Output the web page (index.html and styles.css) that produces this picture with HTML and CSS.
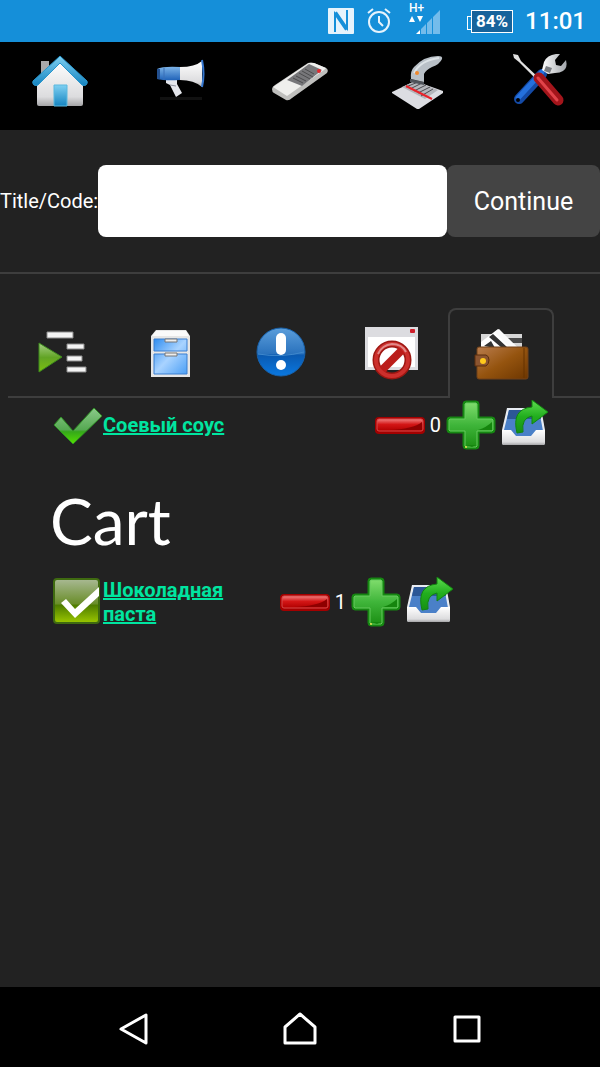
FILE: index.html
```
<!DOCTYPE html>
<html lang="en">
<head>
  <meta charset="UTF-8">
  <meta name="viewport" content="width=device-width, initial-scale=1.0">
  <title>Cart</title>
  <link rel="stylesheet" href="styles.css">
</head>
<body>
  <!-- Shared gradients and the icons used more than once -->
  <svg class="defs" aria-hidden="true">
    <defs>
      <linearGradient id="roof" x1="0" y1="0" x2="0" y2="1"><stop offset="0" stop-color="#7fd0f2"/><stop offset="1" stop-color="#1584c0"/></linearGradient>
      <linearGradient id="wall" x1="0" y1="0" x2="0" y2="1"><stop offset="0" stop-color="#fff"/><stop offset=".8" stop-color="#dcdcde"/><stop offset="1" stop-color="#a5a5a7"/></linearGradient>
      <linearGradient id="blue" x1="0" y1="0" x2="0" y2="1"><stop offset="0" stop-color="#7db4e8"/><stop offset="1" stop-color="#1f62b8"/></linearGradient>
      <linearGradient id="drawer" x1="0" y1="0" x2="1" y2="1"><stop offset="0" stop-color="#2f8df0"/><stop offset=".5" stop-color="#a9d3ff"/><stop offset="1" stop-color="#4b9ff5"/></linearGradient>
      <linearGradient id="ball" x1="0" y1="0" x2="0" y2="1"><stop offset="0" stop-color="#5b9edb"/><stop offset=".54" stop-color="#2a72bd"/><stop offset=".56" stop-color="#0a59b0"/><stop offset="1" stop-color="#0a78e0"/></linearGradient>
      <linearGradient id="red" x1="0" y1="0" x2="0" y2="1"><stop offset="0" stop-color="#f08080"/><stop offset=".45" stop-color="#d41616"/><stop offset="1" stop-color="#b00000"/></linearGradient>
      <linearGradient id="green" x1="0" y1="0" x2="0" y2="1"><stop offset="0" stop-color="#7fdc6c"/><stop offset=".5" stop-color="#3fb53a"/><stop offset="1" stop-color="#1c8f14"/></linearGradient>
      <linearGradient id="arrow" x1="0" y1="0" x2="0" y2="1"><stop offset="0" stop-color="#5fdc50"/><stop offset=".5" stop-color="#22ae1e"/><stop offset="1" stop-color="#169012"/></linearGradient>
      <linearGradient id="tick" x1="0" y1="0" x2="0" y2="1"><stop offset="0" stop-color="#8cc98a"/><stop offset=".6" stop-color="#56a952"/><stop offset=".66" stop-color="#35a81a"/><stop offset="1" stop-color="#55e000"/></linearGradient>
      <linearGradient id="box" x1="0" y1="0" x2="0" y2="1"><stop offset="0" stop-color="#a9b994"/><stop offset=".56" stop-color="#6a8e2a"/><stop offset=".6" stop-color="#4f7d00"/><stop offset="1" stop-color="#9cc800"/></linearGradient>
      <linearGradient id="play" x1="0" y1="0" x2="0" y2="1"><stop offset="0" stop-color="#a6cf85"/><stop offset=".5" stop-color="#62a425"/><stop offset="1" stop-color="#7cc010"/></linearGradient>
      <linearGradient id="leather" x1="0" y1="0" x2="1" y2="1"><stop offset="0" stop-color="#ba7d4e"/><stop offset=".5" stop-color="#95540f"/><stop offset="1" stop-color="#6d3600"/></linearGradient>
      <linearGradient id="metal" x1="0" y1="0" x2="1" y2="0"><stop offset="0" stop-color="#fff"/><stop offset="1" stop-color="#a2a6ab"/></linearGradient>

      <symbol id="minus" viewBox="0 0 50 50">
        <rect x="0" y="17" width="50" height="17" rx="4" fill="#a30000"/>
        <rect x="2" y="19" width="46" height="12" rx="2" fill="url(#red)" stroke="#d64a4a"/>
        <path d="M14 30q24-1 33-8v8z" fill="#8e0000"/>
      </symbol>
      <symbol id="plus" viewBox="0 0 50 50">
        <path d="M20 1h10q3 0 3 3v13h13q3 0 3 3v10q0 3-3 3H33v13q0 3-3 3H20q-3 0-3-3V33H4q-3 0-3-3V20q0-3 3-3h13V4q0-3 3-3z" fill="#168c12" stroke="#168212"/>
        <path d="M20 3h10l1 1v15h15l1 1v10l-1 1H31v15l-1 1H20l-1-1V31H4l-1-1V20l1-1h15V4z" fill="url(#green)" stroke="#66c95e"/>
        <path d="M32 30q9-3 14-8v8zM20 45h10l-4 2z" fill="#15850e"/>
        <circle cx="20" cy="47" r="1" fill="#e6e34b"/>
      </symbol>
      <symbol id="tray" viewBox="0 0 50 50">
        <path d="M6 8h34l4 22v13q0 2-2 2H3q-2 0-2-2V30z" fill="#e8ecf2"/>
        <path d="M8 10h30l4 21-7 7H10l-7-8z" fill="#4a80c8"/>
        <path d="M8 10h30l2 9H6z" fill="#2c5796"/>
        <path d="M1 30h9l5 6h15l5-6h9v13q0 2-2 2H3q-2 0-2-2z" fill="url(#wall)"/>
        <path d="M16 33Q10 9 31 7V0l16 12-16 12v-8q-11 2-9 16z" fill="url(#arrow)" stroke="#11840e"/>
      </symbol>
    </defs>
  </svg>

  <div class="status-bar">
    <svg width="26" height="26" viewBox="0 0 26 26" aria-label="NFC">
      <rect width="26" height="26" rx="1" fill="#e6f3fc"/>
      <path d="M7 24V6l11 16M19 2v18L8 4" fill="none" stroke="#158fd9" stroke-width="2"/>
    </svg>
    <svg class="alarm" width="24" height="26" viewBox="0 0 24 26" fill="none" stroke="#e6f3fc" stroke-width="2" aria-label="Alarm">
      <circle cx="12" cy="14" r="10"/>
      <path d="M12 8v6l4 4M1 5l5-4M23 5l-5-4"/>
    </svg>
    <div class="signal">
      <span class="network">H+</span>
      <svg width="32" height="26" viewBox="0 0 32 26" aria-label="Signal">
        <path d="M0 13l3-6 3 6zM8 7h6l-3 6zM7 25l4-4v4z" fill="#fff"/>
        <path d="M12 20l5-5v10h-5zM18 14l5-5v16h-5zM24 8l7-7v24h-7z" fill="#74bceb"/>
      </svg>
    </div>
    <span class="battery">84%</span>
    <span class="time">11:01</span>
  </div>

  <nav class="main-nav">
    <a href="#home" aria-label="Home">
      <svg viewBox="0 0 56 56">
        <path d="M9 7h8v14H9z" fill="#a9a9ab"/>
        <path d="M5 28L28 6l23 22v22q0 2-2 2H7q-2 0-2-2z" fill="url(#wall)"/>
        <path d="M28 2l27 25q1 2-1 4-2 1-4 0L28 9 6 31q-2 1-4 0-2-2-1-4z" fill="url(#roof)" stroke="#2795cc"/>
        <path d="M22 31h13v21H22z" fill="url(#roof)" stroke="#5bb8de"/>
      </svg>
    </a>
    <a href="#promo" aria-label="Promotions">
      <svg viewBox="0 0 56 56">
        <path d="M8 43h42v3H8z" fill="#111"/>
        <path d="M14 25l11 1v4l5 9-6 4-6-12-4-2z" fill="#e4e6ec"/>
        <path d="M18 31l6 1" stroke="#8e93a0"/>
        <path d="M5 15q6-3 23-2v13q-16 1-23-1z" fill="url(#blue)"/>
        <path d="M5 15h3v10H5z" fill="#23508f"/>
        <path d="M12 14v12" stroke="#3b71b8"/>
        <path d="M28 13q15 0 22-6v26q-8-7-22-7z" fill="url(#wall)"/>
        <path d="M50 6q3 14 0 27" fill="none" stroke="#3476cf" stroke-width="2"/>
      </svg>
    </a>
    <a href="#terminal" aria-label="Terminal">
      <svg viewBox="0 0 56 56">
        <path d="M0 35q0-2 3-4L36 9q3-1 6 0l12 5q3 2 1 5L20 44q-3 3-6 2L2 39q-2-1-2-4z" fill="#bfbfbd"/>
        <path d="M1 33L37 9l5 0 12 5-2 2-37 26z" fill="#efefed"/>
        <path d="M15 26L37 10l13 6-20 16z" fill="#77777a"/>
        <path d="M21 24l10 5M24 22l10 5M27 19l11 6M30 17l11 6M33 15l9 5" stroke="#4c4c4e"/>
        <circle cx="47" cy="17" r="2" fill="#e3282d"/>
      </svg>
    </a>
    <a href="#scanner" aria-label="Scanner">
      <svg viewBox="0 0 56 56">
        <path d="M0 38l23-11 28 10v2L27 55h-2L0 39z" fill="#dcdde2"/>
        <path d="M10 33l13-6 23 9-13 9z" fill="#b4b6bb"/>
        <path d="M14 33l12-5M18 35l12-6M22 37l12-6M26 39l12-6M29 42l12-7" stroke="#4b4b50"/>
        <path d="M14 32l26 13" stroke="#e8232a" stroke-width="2"/>
        <path d="M18 25l14 3v3l-14-3z" fill="#4f535a"/>
        <path d="M19 25q-1-8 3-12Q32 2 46 2q5 0 4 3-2 5-10 8-6 3-8 7v8z" fill="#b9c0c7"/>
        <path d="M22 19Q29 6 47 4" fill="none" stroke="#dce2e6" stroke-width="2"/>
        <circle cx="25" cy="19" r="2" fill="#f0882d"/>
      </svg>
    </a>
    <a href="#settings" aria-label="Settings">
      <svg viewBox="0 0 56 56">
        <path d="M30 20L7 45" stroke="#144aa6" stroke-width="10" stroke-linecap="round"/>
        <path d="M30 18L6 44" stroke="#2470dd" stroke-width="5" stroke-linecap="round"/>
        <path d="M30 16l2-8q3-7 12-8h4l-5 6 1 5 5 1 5-6q2 8-3 11-3 2-8 2l-7 1z" fill="url(#metal)"/>
        <path d="M34 12l6 2-2 5-6-2z" fill="#7a7d82"/>
        <circle cx="6" cy="46" r="2" fill="#000"/>
        <path d="M1 0l5 1 3 6 19 18-2 2L7 8 2 4z" fill="#e1e1e1"/>
        <path d="M27 24L46 46" stroke="#a3151b" stroke-width="11" stroke-linecap="round"/>
        <path d="M26 24l19 22" stroke="#e2434a" stroke-width="3" stroke-linecap="round"/>
      </svg>
    </a>
  </nav>

  <main>
    <form class="search-form">
      <label for="code">Title/Code:</label>
      <input type="text" id="code" name="code">
      <button type="submit">Continue</button>
    </form>

    <nav class="tabs">
      <a href="#list" aria-label="List">
        <svg viewBox="0 0 50 50">
          <path d="M3 16v29l23-15z" fill="url(#play)" stroke="#3c8a1c"/>
          <path d="M11 5h26v6H11zM31 17h17v5H31zM31 29h15v5H31zM31 40h19v5H31z" fill="#f4f4f4" stroke="#8b8b8b"/>
        </svg>
      </a>
      <a href="#archive" aria-label="Archive">
        <svg viewBox="0 0 50 50">
          <path d="M10 3h30l4 6v41H5V9z" fill="#e6e6e6"/>
          <path d="M10 4h30l3 5H6z" fill="#fafafa"/>
          <path d="M8 12h33v12H8zM8 27h33v20H8z" fill="url(#drawer)" stroke="#3b7ed0"/>
          <path d="M19 12h12v3H19zM19 26h12v3H19z" fill="#eee" stroke="#777"/>
        </svg>
      </a>
      <a href="#alerts" aria-label="Alerts">
        <svg viewBox="0 0 50 50">
          <circle cx="25" cy="25" r="24" fill="url(#ball)" stroke="#1761ab"/>
          <path d="M2 27q24 4 46-2" fill="none" stroke="#3f88cc"/>
          <rect x="20" y="6" width="10" height="22" rx="5" fill="#fff"/>
          <circle cx="25" cy="38" r="5" fill="#fff"/>
        </svg>
      </a>
      <a href="#blocked" aria-label="Blocked">
        <svg viewBox="0 0 50 50">
          <path d="M-1 0h53v43H-1z" fill="#dcdce0"/>
          <path d="M2 10h47v30H2z" fill="#fff"/>
          <rect x="44" y="2" width="5" height="4" rx="1" fill="#cf1f2b"/>
          <circle cx="26" cy="33" r="16" fill="none" stroke="#9e1712" stroke-width="7"/>
          <path d="M15 44l22-22" stroke="#bb1d1a" stroke-width="8"/>
          <circle cx="26" cy="33" r="16" fill="none" stroke="#cc2f2c" stroke-width="4"/>
          <path d="M12 27q4-9 14-10 10 0 14 8" fill="none" stroke="#e28a88" stroke-width="2"/>
        </svg>
      </a>
      <a href="#cart" class="active" aria-label="Cart">
        <svg viewBox="0 0 50 50">
          <path d="M5 7h41v14H5z" fill="#d6d6d6"/>
          <path d="M30 11h16v5H34z" fill="#4a4a4a"/>
          <path d="M5 15L22 2l20 19H5z" fill="#fff"/>
          <path d="M19 5l4-3 19 19h-8z" fill="#fafafa"/>
          <path d="M17 7l15 14h-6L13 10zM8 19l7-5 4 7z" fill="#333"/>
          <rect x="1" y="20" width="51" height="32" rx="2" fill="url(#leather)" stroke="#704018"/>
          <path d="M48 21v30" stroke="#653300"/>
          <path d="M-1 28h11q3 1 3 5t-3 6H-1z" fill="#8c5530" stroke="#5d2e0c"/>
          <circle cx="7" cy="34" r="3" fill="#ffc91c"/>
        </svg>
      </a>
    </nav>

    <section class="product found">
      <svg class="icon" viewBox="0 0 50 50"><path d="M1 25l7-8 12 14L41 8l8 8-29 28z" fill="url(#tick)" stroke="#2d8f22" stroke-linejoin="round"/></svg>
      <a href="#product-1" class="product-link">Соевый соус</a>
      <div class="quantity">
        <button type="button" aria-label="Less"><svg class="icon"><use href="#minus"/></svg></button>
        <span>0</span>
        <button type="button" aria-label="More"><svg class="icon"><use href="#plus"/></svg></button>
        <button type="button" aria-label="Move"><svg class="icon"><use href="#tray"/></svg></button>
      </div>
    </section>

    <h1>Cart</h1>

    <section class="product in-cart">
      <svg class="icon" viewBox="0 0 50 50">
        <rect x="1" y="2" width="45" height="44" rx="3" fill="url(#box)" stroke="#3f6a10" stroke-width="2"/>
        <path d="M8 26l5-4 9 10 24-22v9L22 41z" fill="#fff"/>
      </svg>
      <a href="#product-2" class="product-link">Шоколадная паста</a>
      <div class="quantity">
        <button type="button" aria-label="Less"><svg class="icon"><use href="#minus"/></svg></button>
        <span>1</span>
        <button type="button" aria-label="More"><svg class="icon"><use href="#plus"/></svg></button>
        <button type="button" aria-label="Move"><svg class="icon"><use href="#tray"/></svg></button>
      </div>
    </section>
  </main>

  <div class="system-nav">
    <button type="button" aria-label="Back"><svg viewBox="0 0 36 36"><path d="M6 18L31 4v28z"/></svg></button>
    <button type="button" aria-label="Home screen"><svg viewBox="0 0 36 36"><path d="M3 16L18 3l15 13v16H3z"/></svg></button>
    <button type="button" aria-label="Recent apps"><svg viewBox="0 0 36 36"><path d="M6 6h24v24H6z"/></svg></button>
  </div>
</body>
</html>
```
FILE: styles.css
```
* {
  box-sizing: border-box;
}

body {
  margin: 0;
  min-height: 100vh;
  display: flex;
  flex-direction: column;
  background: #222;
  color: #fff;
  font-family: Roboto, "Noto Sans", sans-serif;
  font-size: 20px;
  line-height: 24px;
}

svg {
  display: block;
  overflow: visible;
}

button {
  padding: 0;
  border: none;
  background: none;
  color: inherit;
  font-family: inherit;
  cursor: pointer;
}

.defs {
  position: absolute;
  width: 0;
  height: 0;
}

/* Android status bar */
.status-bar {
  display: flex;
  justify-content: flex-end;
  align-items: center;
  height: 42px;
  padding-right: 14px;
  background: #158fd9;
}

.alarm {
  margin: 0 18px 0 13px;
}

.signal {
  position: relative;
  margin-right: 30px;
}

.network {
  position: absolute;
  top: -5px;
  left: 0;
  font-size: 12px;
  font-weight: 500;
  line-height: 12px;
}

.signal svg {
  margin-top: 2px;
}

.battery {
  position: relative;
  width: 42px;
  margin-right: 12px;
  border: 1px solid #fff;
  background: #17639b;
  font-size: 17px;
  font-weight: 700;
  line-height: 21px;
  text-align: center;
}

.battery::before {
  content: "";
  position: absolute;
  top: 5px;
  left: -5px;
  width: 4px;
  height: 12px;
  border: 1px solid #fff;
  border-right: none;
}

.time {
  font-size: 24px;
  font-weight: 500;
}

.main-nav {
  display: grid;
  grid-template-columns: repeat(5, 1fr);
  justify-items: center;
  padding: 12px 0 20px;
  background: #000;
}

.main-nav svg {
  width: 56px;
  height: 56px;
}

main {
  flex: 1;
}

.search-form {
  display: flex;
  align-items: center;
  padding: 35px 0;
  border-bottom: 2px solid #3e3e3e;
}

.search-form input {
  flex: 1;
  min-width: 0;
  height: 72px;
  padding: 0 16px;
  border: none;
  border-radius: 8px;
  background: #fff;
  font-size: 24px;
}

.search-form button {
  width: 153px;
  height: 72px;
  border-radius: 8px;
  background: #444;
  font-size: 25px;
}

.tabs {
  display: flex;
  gap: 4px;
  margin: 34px 0 0 8px;
  border-bottom: 2px solid #3e3e3e;
}

.tabs a {
  margin-bottom: -2px;
  padding: 17px 26px 21px;
  border: 2px solid transparent;
  border-bottom: none;
  border-radius: 8px 8px 0 0;
}

.tabs .active {
  border-color: #3e3e3e;
  background: #222;
}

.tabs svg,
.icon {
  width: 50px;
  height: 50px;
}

.icon {
  flex: none;
}

.product {
  display: flex;
  align-items: center;
  padding-left: 53px;
}

.found {
  margin-top: 2px;
  padding-right: 49px;
}

.in-cart {
  padding-right: 24%;
}

.product-link {
  max-width: 130px;
  color: #00e5a0;
  font-weight: 700;
}

.quantity {
  display: flex;
  align-items: center;
  gap: 5px;
  margin-left: auto;
}

h1 {
  margin: 31px 50px 16px;
  font-family: Lato, sans-serif;
  font-size: 64px;
  font-weight: 400;
  line-height: 80px;
}

/* Android navigation buttons */
.system-nav {
  display: grid;
  grid-template-columns: repeat(3, 1fr);
  justify-items: center;
  align-items: center;
  height: 80px;
  padding: 4px 50px 0;
  background: #000;
}

.system-nav svg {
  width: 36px;
  height: 36px;
  fill: none;
  stroke: #fff;
  stroke-width: 3;
  stroke-linejoin: round;
}
```
